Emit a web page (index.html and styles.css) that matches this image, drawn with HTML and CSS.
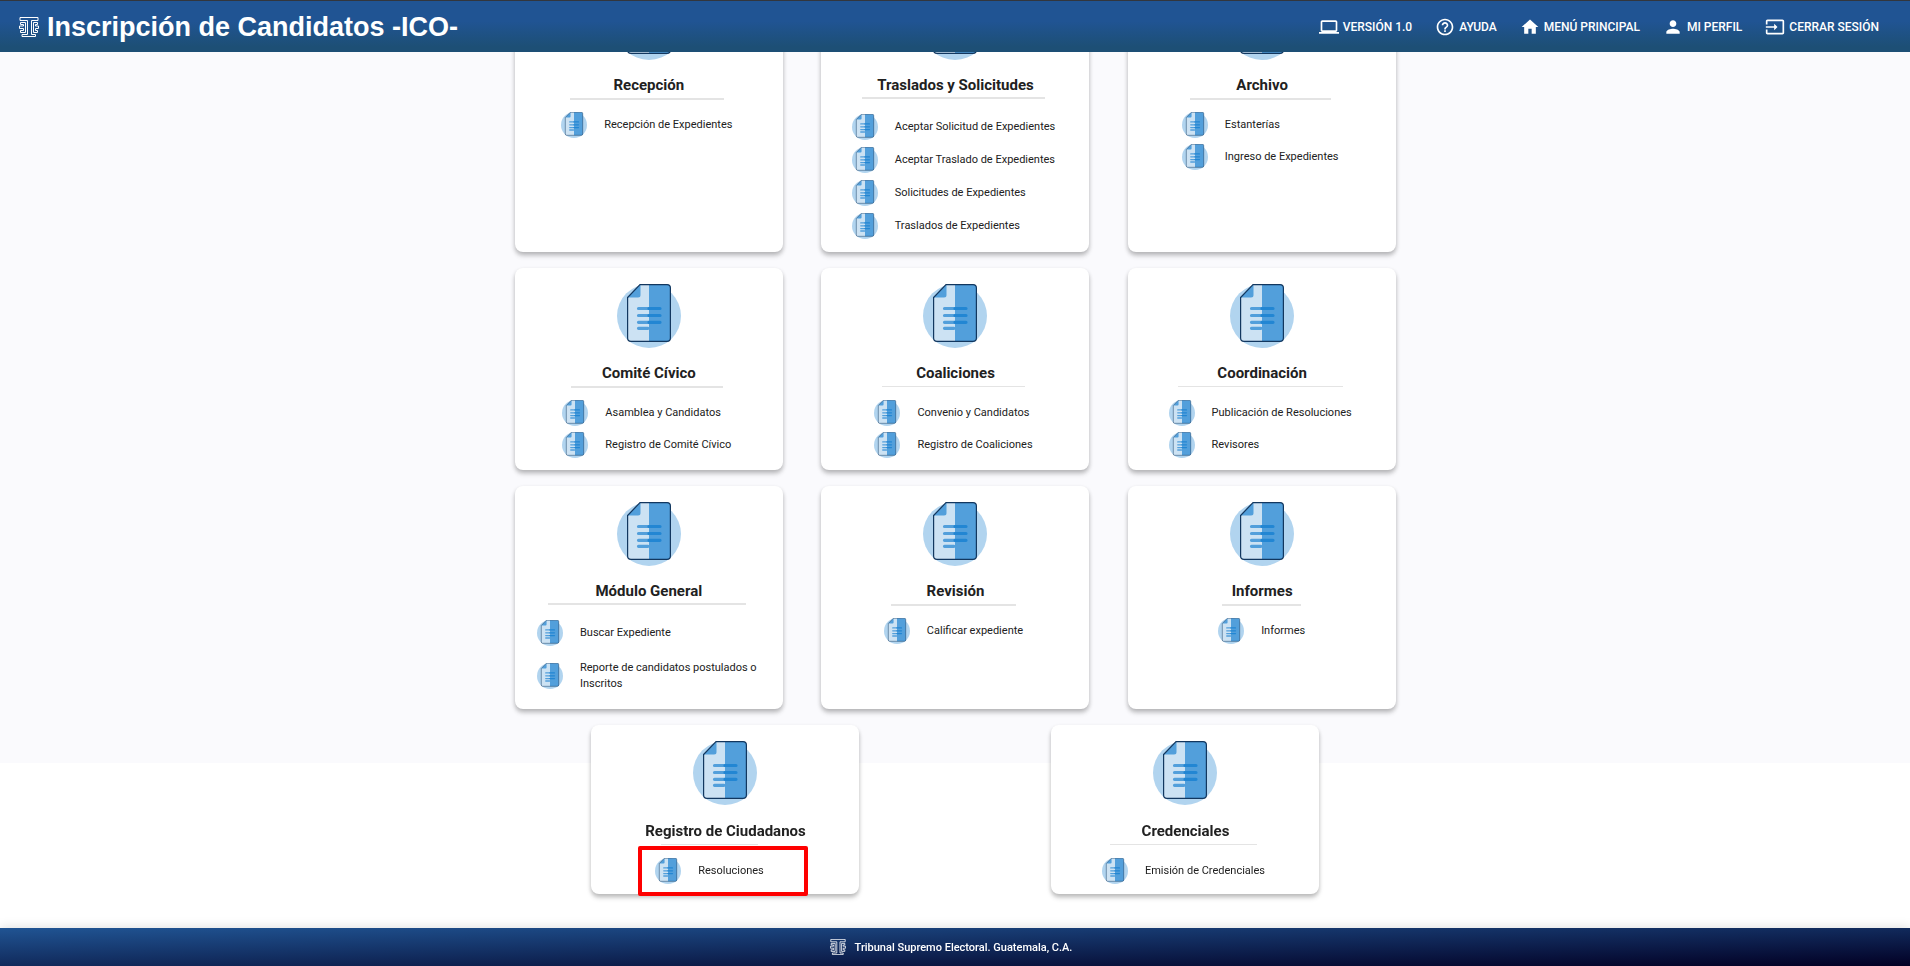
FILE: index.html
```html
<!DOCTYPE html>
<html lang="es">
<head>
<meta charset="utf-8">
<meta name="viewport" content="width=device-width, initial-scale=1">
<title>Inscripción de Candidatos -ICO-</title>
<link rel="stylesheet" href="styles.css">
</head>
<body>
<svg class="sprite" aria-hidden="true">
  <symbol id="doc" viewBox="0 0 64 64">
    <circle cx="32" cy="32" r="32" fill="#b1d4ef"/>
    <path d="M10.500 14 L23 .6 H32 V57.400 H14 Q10.500 57.400 10.500 54Z" fill="#cce2f3"/>
    <path d="M32 .6 H50 Q53.500 .6 53.500 4 V54 Q53.500 57.400 50 57.400 H32Z" fill="#529fdb"/>
    <path d="M10.500 13.500 L23.500 .6 V11 Q23.500 13.500 21 13.500Z" fill="#529fdb"/>
    <path d="M21.500 24.500H32M21.500 31.500H32M21.500 38.300H32M21.500 44.300H31" stroke="#529fdb" stroke-width="3.200" stroke-linecap="round"/>
    <path d="M32 24.500H43M32 31.500H43M32 38.300H43" stroke="#2286d3" stroke-width="3.200" stroke-linecap="round"/>
    <path d="M10.600 13.500 L23 .6 H50 Q53.400 .6 53.400 4 V54 Q53.400 57.400 50 57.400 H14 Q10.600 57.400 10.600 54Z" fill="none" stroke="#12375f" stroke-width="1.200"/>
  </symbol>
  <symbol id="tse" viewBox="0 0 20 20">
    <g fill="none" stroke="currentColor" stroke-width="1">
      <path d="M1 .5H19V3.500H12.500V17.500H16.500V19.500H3V17.500H8.500V3.500H1Z"/>
      <path d="M1.500 5.500H6.500V15.500H1.500V13.500H4.500V11.500H.5V9H4.500V7.500H1.500Z"/>
      <path d="M18.500 5.500H14.500V15.500H18.500V13.500H16.500V11.500H19.500V9H16.500V7.500H18.500Z"/>
    </g>
  </symbol>
</svg>

<header class="topbar">
  <h1 class="brand"><svg class="brand-logo"><use href="#tse"/></svg>Inscripción de Candidatos -ICO-</h1>
  <nav class="topnav">
    <a href="#"><svg viewBox="0 0 24 24"><path d="M20 18c1.100 0 2-.9 2-2V6c0-1.100-.9-2-2-2H4c-1.100 0-2 .9-2 2v10c0 1.100.9 2 2 2H0v2h24v-2h-4zM4 6h16v10H4V6z"/></svg>VERSIÓN 1.0</a>
    <a href="#"><svg viewBox="0 0 24 24"><path d="M11 18h2v-2h-2v2zm1-16C6.480 2 2 6.480 2 12s4.480 10 10 10 10-4.480 10-10S17.520 2 12 2zm0 18c-4.410 0-8-3.590-8-8s3.590-8 8-8 8 3.590 8 8-3.590 8-8 8zm0-14c-2.210 0-4 1.790-4 4h2c0-1.100.9-2 2-2s2 .9 2 2c0 2-3 1.750-3 5h2c0-2.250 3-2.500 3-5 0-2.210-1.790-4-4-4z"/></svg>AYUDA</a>
    <a href="#"><svg viewBox="0 0 24 24"><path d="M10 20v-6h4v6h5v-8h3L12 3 2 12h3v8z"/></svg>MENÚ PRINCIPAL</a>
    <a href="#"><svg viewBox="0 0 24 24"><path d="M12 12c2.210 0 4-1.790 4-4s-1.790-4-4-4-4 1.790-4 4 1.790 4 4 4zm0 2c-2.670 0-8 1.340-8 4v2h16v-2c0-2.660-5.330-4-8-4z"/></svg>MI PERFIL</a>
    <a href="#"><svg viewBox="0 0 24 24"><path d="M21 3.010H3c-1.100 0-2 .9-2 2V9h2V4.990h18v14.030H3V15H1v4.010c0 1.100.9 1.980 2 1.980h18c1.100 0 2-.88 2-1.980v-14c0-1.110-.9-2-2-2zM11 16l4-4-4-4v3H1v2h10v3z"/></svg>CERRAR SESIÓN</a>
  </nav>
</header>

<main class="scroller">
  <div class="page">
    <div class="modules">
      <section class="card">
        <svg class="card-icon"><use href="#doc"/></svg>
        <h2>Recepción</h2>
        <div class="menu"><ul>
          <li><a href="#"><svg><use href="#doc"/></svg>Recepción de Expedientes</a></li>
        </ul></div>
      </section>
      <section class="card">
        <svg class="card-icon"><use href="#doc"/></svg>
        <h2>Traslados y Solicitudes</h2>
        <div class="menu menu-tall"><ul>
          <li><a href="#"><svg><use href="#doc"/></svg>Aceptar Solicitud de Expedientes</a></li>
          <li><a href="#"><svg><use href="#doc"/></svg>Aceptar Traslado de Expedientes</a></li>
          <li><a href="#"><svg><use href="#doc"/></svg>Solicitudes de Expedientes</a></li>
          <li><a href="#"><svg><use href="#doc"/></svg>Traslados de Expedientes</a></li>
        </ul></div>
      </section>
      <section class="card">
        <svg class="card-icon"><use href="#doc"/></svg>
        <h2>Archivo</h2>
        <div class="menu"><ul>
          <li><a href="#"><svg><use href="#doc"/></svg>Estanterías</a></li>
          <li><a href="#"><svg><use href="#doc"/></svg>Ingreso de Expedientes</a></li>
        </ul></div>
      </section>

      <section class="card">
        <svg class="card-icon"><use href="#doc"/></svg>
        <h2>Comité Cívico</h2>
        <div class="menu"><ul>
          <li><a href="#"><svg><use href="#doc"/></svg>Asamblea y Candidatos</a></li>
          <li><a href="#"><svg><use href="#doc"/></svg>Registro de Comité Cívico</a></li>
        </ul></div>
      </section>
      <section class="card">
        <svg class="card-icon"><use href="#doc"/></svg>
        <h2>Coaliciones</h2>
        <div class="menu menu-thin"><ul>
          <li><a href="#"><svg><use href="#doc"/></svg>Convenio y Candidatos</a></li>
          <li><a href="#"><svg><use href="#doc"/></svg>Registro de Coaliciones</a></li>
        </ul></div>
      </section>
      <section class="card">
        <svg class="card-icon"><use href="#doc"/></svg>
        <h2>Coordinación</h2>
        <div class="menu menu-thin"><ul>
          <li><a href="#"><svg><use href="#doc"/></svg>Publicación de Resoluciones</a></li>
          <li><a href="#"><svg><use href="#doc"/></svg>Revisores</a></li>
        </ul></div>
      </section>

      <section class="card">
        <svg class="card-icon"><use href="#doc"/></svg>
        <h2>Módulo General</h2>
        <div class="menu menu-tall menu-wrap"><ul>
          <li><a href="#"><svg><use href="#doc"/></svg>Buscar Expediente</a></li>
          <li><a href="#"><svg><use href="#doc"/></svg><span>Reporte de candidatos postulados o<br>Inscritos</span></a></li>
        </ul></div>
      </section>
      <section class="card">
        <svg class="card-icon"><use href="#doc"/></svg>
        <h2>Revisión</h2>
        <div class="menu"><ul>
          <li><a href="#"><svg><use href="#doc"/></svg>Calificar expediente</a></li>
        </ul></div>
      </section>
      <section class="card">
        <svg class="card-icon"><use href="#doc"/></svg>
        <h2>Informes</h2>
        <div class="menu menu-short"><ul>
          <li><a href="#"><svg><use href="#doc"/></svg>Informes</a></li>
        </ul></div>
      </section>

      <section class="card card-half">
        <svg class="card-icon"><use href="#doc"/></svg>
        <h2>Registro de Ciudadanos</h2>
        <div class="menu menu-thin menu-single"><ul>
          <li><a href="#"><svg><use href="#doc"/></svg>Resoluciones</a></li>
        </ul></div>
        <div class="highlight"></div>
      </section>
      <section class="card card-half">
        <svg class="card-icon"><use href="#doc"/></svg>
        <h2>Credenciales</h2>
        <div class="menu menu-thin"><ul>
          <li><a href="#"><svg><use href="#doc"/></svg>Emisión de Credenciales</a></li>
        </ul></div>
      </section>
    </div>
  </div>
</main>

<footer class="footer"><svg class="footer-logo"><use href="#tse"/></svg>Tribunal Supremo Electoral. Guatemala, C.A.</footer>
</body>
</html>
```

FILE: styles.css
```css
* { box-sizing: border-box; }

body {
  margin: 0;
  height: 100vh;
  display: flex;
  flex-direction: column;
  background: #fff;
  color: #212121;
  font-family: Roboto, "Liberation Sans", sans-serif;
}

a { color: inherit; text-decoration: none; }

.sprite { position: absolute; width: 0; height: 0; }

/* Top bar */
.topbar {
  flex: none;
  height: 52px;
  padding: 0 31px 0 19px;
  display: flex;
  align-items: center;
  justify-content: space-between;
  border-top: 1px solid #32363d;
  background: linear-gradient(#205493 40%, #1d4f75 90%);
  color: #fff;
}

.brand {
  margin: 0;
  display: flex;
  align-items: center;
  gap: 8px;
  font: bold 27px/36px "Liberation Sans", Arial, sans-serif;
}

.brand-logo { width: 20px; height: 20px; }

.topnav {
  display: flex;
  gap: 23px;
  font-size: 12px;
  font-weight: 500;
}

.topnav a { display: flex; align-items: center; gap: 4px; }
.topnav svg { width: 20px; height: 20px; fill: currentColor; }

/* The reversed column starts scrolled to its end */
.scroller {
  flex: 1;
  min-height: 0;
  display: flex;
  flex-direction: column-reverse;
  overflow-y: auto;
  scrollbar-width: none;
}

.page {
  flex: none;
  padding: 0 0 34px 1px;
  background: linear-gradient(#fafafd 783px, #fff 783px);
}

.modules {
  max-width: 920px;
  margin: 0 auto;
  display: grid;
  grid-template-columns: repeat(6, 1fr);
  row-gap: 16px;
}

/* Cards */
.card {
  position: relative;
  grid-column: span 2;
  justify-self: center;
  width: 268px;
  padding: 16px 0 12px;
  display: flex;
  flex-direction: column;
  align-items: center;
  border-radius: 8px;
  background: #fff;
  box-shadow: 0 4px 5px rgba(0, 0, 0, .16), 0 2px 4px rgba(0, 0, 0, .16);
}

.card-half { grid-column: span 3; padding-bottom: 10px; }
.card-icon { width: 64px; height: 64px; }

.card h2 {
  margin: 15px 0 3px;
  font-size: 15px;
  line-height: 20px;
  font-weight: 700;
}

.card-half h2 { margin-top: 16px; }

.menu { padding: 0 5px 0 1px; }

.menu::before {
  content: "";
  display: block;
  width: 90%;
  height: 2px;
  margin: 0 auto;
  background: #e4e4e4;
}

.menu ul {
  margin: 12px 0 0;
  padding: 0;
  display: grid;
  gap: 6px;
  list-style: none;
}

.menu a {
  display: flex;
  align-items: center;
  gap: 17px;
  font-size: 11px;
  line-height: 16px;
}

.menu svg { flex: none; width: 26px; height: 26px; }

.menu-thin::before { height: 1px; }
.menu-thin ul { margin-top: 13px; }
.menu-tall { margin-top: -1px; padding-bottom: 1px; }
.menu-tall ul { margin-top: 15px; gap: 7px; }
.menu-wrap { padding-bottom: 5px; }
.menu-wrap ul { gap: 14px; }
.menu-short { padding: 0 8px 0 7px; }
.menu-single { padding: 0 34px 0 2px; }

/* Callout frame over the entry */
.highlight {
  position: absolute;
  left: 47px;
  bottom: -2px;
  width: 170px;
  height: 50px;
  border: 4px solid #fe0000;
  border-radius: 2px;
  pointer-events: none;
}

/* Footer */
.footer {
  flex: none;
  height: 38px;
  padding-right: 8px;
  display: flex;
  align-items: center;
  justify-content: center;
  gap: 9px;
  background: linear-gradient(to bottom right, #205493, #020024);
  box-shadow: 0 0 12px rgba(0, 0, 0, .15);
  color: #fff;
  font-size: 11px;
  font-weight: 500;
}

.footer-logo { width: 16px; height: 16px; }
```
